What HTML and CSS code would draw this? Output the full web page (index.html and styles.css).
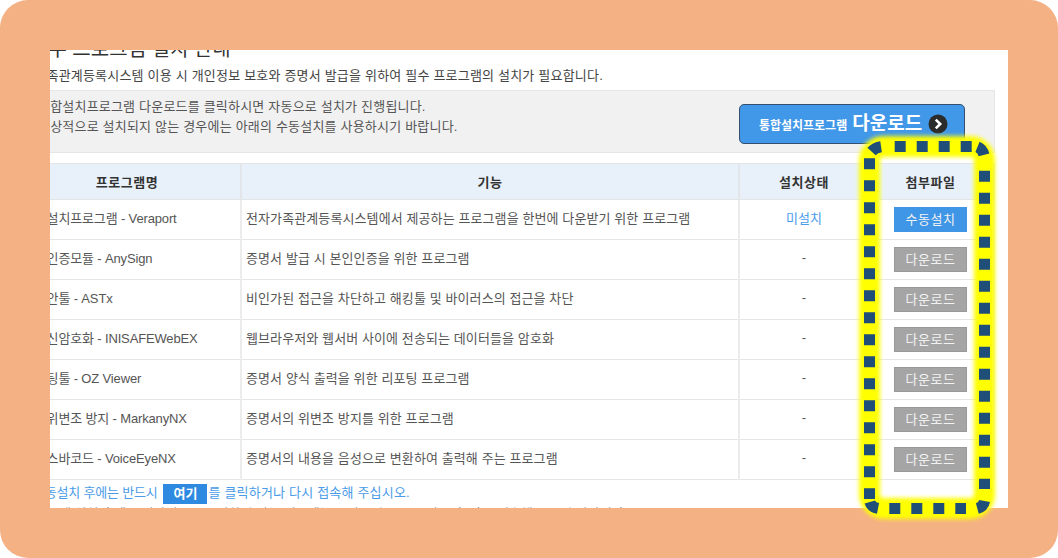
FILE: index.html
```html
<!DOCTYPE html>
<html lang="ko">
<head>
  <meta charset="UTF-8">
  <title>필수 프로그램 설치 안내</title>
  <link rel="stylesheet" href="styles.css">
</head>
<body>
  <div class="frame">
    <div class="panel">
      <div class="page">
        <h2 class="title">필수 프로그램 설치 안내</h2>
        <p class="lead">전자가족관계등록시스템 이용 시 개인정보 보호와 증명서 발급을 위하여 필수 프로그램의 설치가 필요합니다.</p>
        <div class="notice">
          <div class="notice-text">
            <p>통합설치프로그램 다운로드를 클릭하시면 자동으로 설치가 진행됩니다.</p>
            <p>정상적으로 설치되지 않는 경우에는 아래의 수동설치를 사용하시기 바랍니다.</p>
          </div>
          <a class="install-btn" href="#">
            <span class="small">통합설치프로그램</span>
            <span class="big">다운로드</span>
            <svg class="go" viewBox="0 0 20 20">
              <circle cx="10" cy="10" r="9.5" fill="#2b2b2b"/>
              <path d="M7.8 5.6L12.2 10L7.8 14.4" fill="none" stroke="#fff" stroke-width="2.6"/>
            </svg>
          </a>
        </div>
        <table class="programs">
          <colgroup>
            <col class="c-name"><col class="c-func"><col class="c-state"><col class="c-file">
          </colgroup>
          <thead>
            <tr><th class="name-head">프로그램명</th><th>기능</th><th class="state-head">설치상태</th><th>첨부파일</th></tr>
          </thead>
          <tbody>
            <tr>
              <td class="name">통합설치프로그램 - Veraport</td>
              <td>전자가족관계등록시스템에서 제공하는 프로그램을 한번에 다운받기 위한 프로그램</td>
              <td class="state missing">미설치</td>
              <td class="file"><a class="btn manual" href="#">수동설치</a></td>
            </tr>
            <tr>
              <td class="name">공인인증모듈 - AnySign</td>
              <td>증명서 발급 시 본인인증을 위한 프로그램</td>
              <td class="state">-</td>
              <td class="file"><a class="btn" href="#">다운로드</a></td>
            </tr>
            <tr>
              <td class="name">웹보안툴 - ASTx</td>
              <td>비인가된 접근을 차단하고 해킹툴 및 바이러스의 접근을 차단</td>
              <td class="state">-</td>
              <td class="file"><a class="btn" href="#">다운로드</a></td>
            </tr>
            <tr>
              <td class="name">웹통신암호화 - INISAFEWebEX</td>
              <td>웹브라우저와 웹서버 사이에 전송되는 데이터들을 암호화</td>
              <td class="state">-</td>
              <td class="file"><a class="btn" href="#">다운로드</a></td>
            </tr>
            <tr>
              <td class="name">리포팅툴 - OZ Viewer</td>
              <td>증명서 양식 출력을 위한 리포팅 프로그램</td>
              <td class="state">-</td>
              <td class="file"><a class="btn" href="#">다운로드</a></td>
            </tr>
            <tr>
              <td class="name">문서위변조 방지 - MarkanyNX</td>
              <td>증명서의 위변조 방지를 위한 프로그램</td>
              <td class="state">-</td>
              <td class="file"><a class="btn" href="#">다운로드</a></td>
            </tr>
            <tr>
              <td class="name">보이스바코드 - VoiceEyeNX</td>
              <td>증명서의 내용을 음성으로 변환하여 출력해 주는 프로그램</td>
              <td class="state">-</td>
              <td class="file"><a class="btn" href="#">다운로드</a></td>
            </tr>
          </tbody>
        </table>
        <p class="after"><span class="head">수동설치 후에는 반드시</span><a class="here" href="#">여기</a><span class="tail">를 클릭하거나 다시 접속해 주십시오.</span></p>
        <p class="cut">프로그램 설치 후에도 정상적으로 동작하지 않는 경우에는 브라우저를 모두 닫은 후 다시 접속해 주시기 바랍니다.</p>
      </div>
    </div>

    <svg class="highlight" viewBox="0 0 1058 558">
      <defs>
        <filter id="soft" x="-20%" y="-20%" width="140%" height="140%">
          <feGaussianBlur stdDeviation="2"/>
        </filter>
      </defs>
      <rect class="glow" x="869.5" y="146.5" width="115" height="362" rx="14" filter="url(#soft)"/>
      <g class="dots">
        <path d="M894.7 146.5H971.7"/>
        <path d="M869.5 158.3V499"/>
        <path d="M984.5 170.7V489"/>
        <path d="M889.3 508.5H966"/>
        <path d="M871.5 151.5Q875.5 147 883 146.5"/>
        <path d="M977.5 146.8Q984 149.5 984.6 159"/>
        <path d="M869.8 502Q871.5 507.5 879 508.6"/>
        <path d="M984.6 501Q983.5 507 977 508.6"/>
      </g>
    </svg>
  </div>
</body>
</html>
```

FILE: styles.css
```css
* {
  box-sizing: border-box;
}
html, body {
  margin: 0;
  padding: 0;
  background: #fff;
}
body {
  width: 1058px;
  height: 558px;
  overflow: hidden;
  font-family: "Liberation Sans", "Noto Sans CJK KR", sans-serif;
  font-size: 13px;
  color: #555;
}
p {
  margin: 0;
}
a {
  text-decoration: none;
}
.frame {
  position: relative;
  width: 1058px;
  height: 558px;
  padding: 50px;
  background: #f4b183;
  border-radius: 28px;
}
.panel {
  width: 958px;
  height: 458px;
  background: #fff;
  overflow: hidden;
}
.page {
  width: 995px;
  margin-left: -50px;
  margin-top: -14px;
}
.title {
  margin: 0;
  height: 26px;
  padding-left: 30px;
  font-size: 20px;
  line-height: 26px;
  font-weight: 400;
  color: #333;
}
.lead {
  height: 28px;
  padding-left: 10px;
  line-height: 28px;
  letter-spacing: 0.2px;
  color: #444;
}
.notice {
  display: flex;
  align-items: center;
  justify-content: space-between;
  height: 63px;
  padding: 0 29px 0 38px;
  background: #f1f1f1;
  border: 1px solid #e6e6e6;
  border-left: 0;
}
.notice-text {
  line-height: 20px;
  margin-top: -10px;
  letter-spacing: 0.2px;
}
.install-btn {
  display: flex;
  align-items: center;
  justify-content: center;
  gap: 5px;
  width: 226px;
  height: 40px;
  margin-top: 5px;
  padding-left: 3px;
  background: #4197e8;
  border: 1px solid #33506f;
  border-radius: 5px;
  color: #fff;
  font-weight: 700;
}
.install-btn .small {
  font-size: 12px;
}
.install-btn .big {
  font-size: 19px;
  line-height: 24px;
}
.install-btn .go {
  width: 20px;
  height: 20px;
  margin-left: 1px;
}
.programs {
  width: 995px;
  margin-top: 10px;
  border-collapse: collapse;
  table-layout: fixed;
}
.c-name { width: 241px; }
.c-state { width: 128px; }
.c-file { width: 127px; }
.programs th {
  height: 36px;
  padding: 0;
  background: #e8f1f9;
  border: 1px solid #e3e6e8;
  border-width: 1px 2px 1px 0;
  font-size: 13px;
  font-weight: 700;
  color: #333;
  letter-spacing: 0.5px;
}
.programs th.name-head {
  padding-left: 14px;
}
.programs th.state-head {
  padding-left: 2px;
}
.programs td {
  height: 40px;
  padding: 0 0 5px 4px;
  border-bottom: 1px solid #e6e6e6;
  border-right: 2px solid #ececec;
  letter-spacing: 0.1px;
}
.programs td.name {
  padding-left: 23px;
  letter-spacing: -0.15px;
}
.programs td.state {
  padding: 0 0 5px 2px;
  text-align: center;
}
.programs td.missing {
  color: #4a9be8;
}
.programs td.file {
  padding: 0;
  text-align: center;
}
.btn {
  display: inline-block;
  vertical-align: middle;
  width: 73px;
  height: 25px;
  line-height: 23px;
  background: #a5a5a5;
  border: 1px solid #999;
  color: #f2f2f2;
  letter-spacing: 0.5px;
}
.btn.manual {
  background: #3f95e6;
  border-color: #3f95e6;
}
.after {
  height: 27px;
  padding-left: 33px;
  line-height: 26px;
  color: #4a9be8;
}
.after .head {
  letter-spacing: -0.2px;
}
.after .tail {
  letter-spacing: 0.2px;
}
.here {
  display: inline-block;
  width: 44px;
  height: 20px;
  margin: 0 1px 0 6px;
  line-height: 20px;
  background: #2e8ae0;
  color: #fff;
  font-weight: 700;
  text-align: center;
  vertical-align: middle;
}
.cut {
  padding-left: 23px;
  line-height: 13px;
  color: #888;
}
.highlight {
  position: absolute;
  top: 0;
  left: 0;
  width: 1058px;
  height: 558px;
  pointer-events: none;
}
.glow {
  fill: none;
  stroke: #ffff00;
  stroke-width: 21;
}
.dots path {
  fill: none;
  stroke: #1f4e79;
  stroke-width: 11;
  stroke-dasharray: 11 11;
}
```
